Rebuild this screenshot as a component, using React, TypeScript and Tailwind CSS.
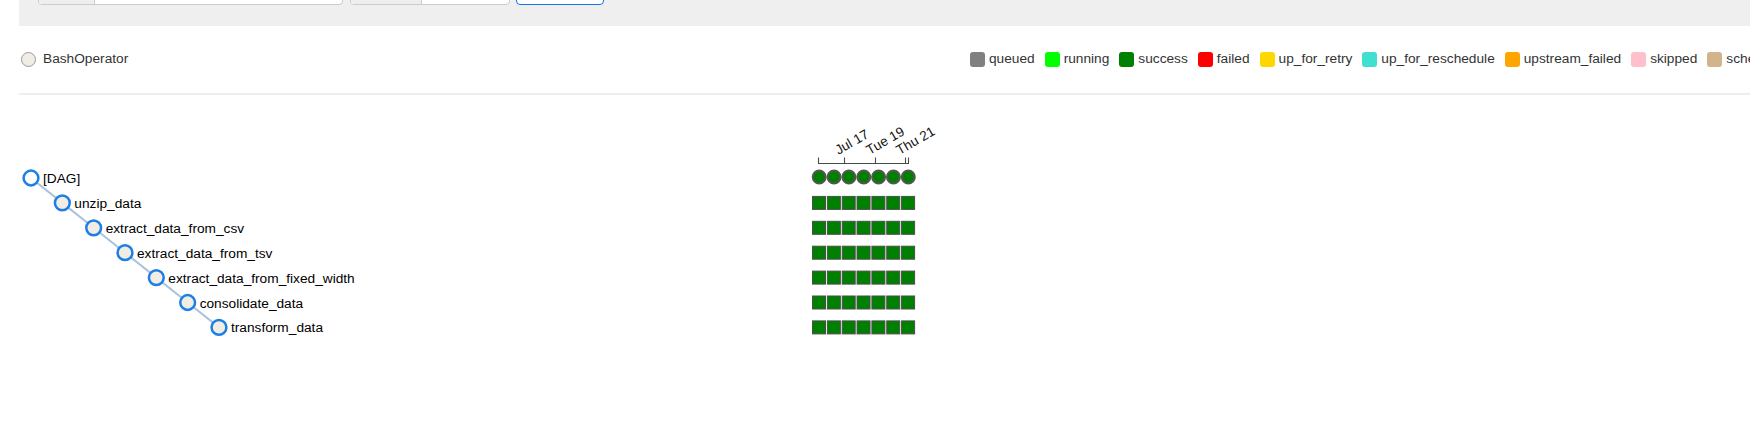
import React from "react"

const tasks = [
  "[DAG]",
  "unzip_data",
  "extract_data_from_csv",
  "extract_data_from_tsv",
  "extract_data_from_fixed_width",
  "consolidate_data",
  "transform_data",
]

const legend = [
  { label: "queued", cls: "bg-[#808080]" },
  { label: "running", cls: "bg-[#00ff00]" },
  { label: "success", cls: "bg-[#008000]" },
  { label: "failed", cls: "bg-[#ff0000]" },
  { label: "up_for_retry", cls: "bg-[#ffd700]" },
  { label: "up_for_reschedule", cls: "bg-[#40e0d0]" },
  { label: "upstream_failed", cls: "bg-[#ffa500]" },
  { label: "skipped", cls: "bg-[#ffc0cb]" },
  { label: "scheduled", cls: "bg-[#d2b48c]" },
  { label: "no_status", cls: "bg-white border border-[#ccc]" },
]

// svg origin sits at page (19, 95)
const OX = 19
const OY = 95
const nodeX = (i: number) => 31 + 31.33 * i - OX
const nodeY = (i: number) => 178 + 24.9 * i - OY

const RUNS = 7
const GRID_X = 812 - OX
const PITCH = 14.85

const ticks = [
  { x: 844.5, label: "Jul 17" },
  { x: 875.5, label: "Tue 19" },
  { x: 905.5, label: "Thu 21" },
]

function TreeGrid() {
  const axisY = 163.5 - OY
  return (
    <svg width={1731} height={331} className="block" fontFamily="'Liberation Sans', Arial, sans-serif">
      {/* links */}
      {tasks.slice(1).map((_, idx) => {
        const i = idx + 1
        return (
          <line
            key={"l" + i}
            x1={nodeX(i - 1)}
            y1={nodeY(i - 1)}
            x2={nodeX(i)}
            y2={nodeY(i)}
            stroke="#a9c3de"
            strokeWidth={2}
          />
        )
      })}

      {/* nodes */}
      {tasks.map((t, i) => (
        <g key={t}>
          <circle
            cx={nodeX(i)}
            cy={nodeY(i)}
            r={7.4}
            fill={i === 0 ? "#ffffff" : "#f0ede4"}
            stroke="#1e7ee6"
            strokeWidth={2.5}
          />
          <text x={nodeX(i) + 12} y={nodeY(i) + 5} fontSize={13.7} fill="#000">
            {t}
          </text>
        </g>
      ))}

      {/* time axis */}
      <g stroke="#4a4a4a" strokeWidth={1.1} fill="none">
        <path d={`M${818.5 - OX},${axisY - 6}V${axisY}H${908.5 - OX}V${axisY - 6}`} />
        {ticks.map((tk) => (
          <line key={tk.label} x1={tk.x - OX} x2={tk.x - OX} y1={axisY - 6} y2={axisY} />
        ))}
      </g>
      {ticks.map((tk) => {
        const x = tk.x - OX - 6
        const y = 155 - OY
        return (
          <text key={tk.label} x={x} y={y} fontSize={13.5} fill="#111" transform={`rotate(-30 ${x} ${y})`}>
            {tk.label}
          </text>
        )
      })}

      {/* dag runs */}
      {Array.from({ length: RUNS }).map((_, k) => (
        <circle
          key={"run" + k}
          cx={GRID_X + 7.2 + PITCH * k}
          cy={177 - OY}
          r={6.5}
          fill="#008000"
          stroke="#555555"
          strokeWidth={2}
        />
      ))}

      {/* task instances */}
      {tasks.slice(1).map((t, idx) =>
        Array.from({ length: RUNS }).map((_, k) => (
          <rect
            key={t + k}
            x={GRID_X + 0.5 + PITCH * k}
            y={nodeY(idx + 1) - 6.5}
            width={13}
            height={13}
            fill="#008000"
            stroke="#4d4d4d"
            strokeWidth={1}
          />
        ))
      )}
    </svg>
  )
}

export default function App() {
  return (
    <div className="w-[1750px] h-[426px] overflow-hidden bg-white font-['Liberation_Sans',Arial,sans-serif]">
      <div className="ml-[19px] w-[1900px]">
        {/* filter bar, scrolled mostly out of view */}
        <div className="h-[26px] bg-[#efefef] pl-[19px] flex items-start">
          <div className="-mt-[29px] flex h-[34px] w-[305px] overflow-hidden rounded-[4px] border border-[#cccccc] bg-white">
            <span className="w-[56px] border-r border-[#cccccc] bg-[#eeeeee]" />
          </div>
          <div className="-mt-[29px] ml-[7px] flex h-[34px] w-[160px] overflow-hidden rounded-[4px] border border-[#cccccc] bg-white">
            <span className="w-[71px] border-r border-[#cccccc] bg-[#eeeeee]" />
          </div>
          <button className="-mt-[29px] ml-[6px] h-[34px] w-[88px] rounded-[4px] border border-[#1a73e8] bg-white" />
        </div>

        {/* operators + legend */}
        <div className="flex h-[67px] items-center">
          <div className="flex w-[951px] shrink-0 items-center pl-[2px]">
            <span className="h-[15px] w-[15px] rounded-full border border-[#999999] bg-[#f0ede4]" />
            <span className="ml-[7px] text-[13.7px] text-[#333333]">BashOperator</span>
          </div>
          <div className="flex shrink-0 items-center gap-[10px] whitespace-nowrap">
            {legend.map((l) => (
              <div key={l.label} className="flex items-center">
                <span className={"h-[15px] w-[15px] rounded-[3px] " + l.cls} />
                <span className="ml-[4px] text-[13.7px] text-[#333333]">{l.label}</span>
              </div>
            ))}
          </div>
        </div>
        <div className="h-[2px] bg-[#eeeeee]" />

        <TreeGrid />
      </div>
    </div>
  )
}
